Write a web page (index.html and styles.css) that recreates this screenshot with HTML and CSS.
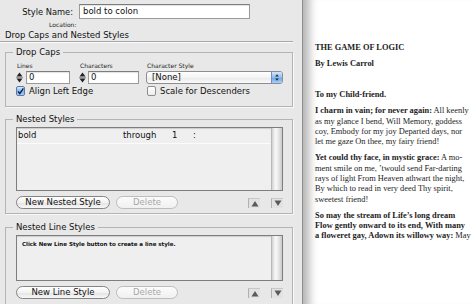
FILE: index.html
```html
<!DOCTYPE html>
<html>
<head>
<meta charset="utf-8">
<link rel="stylesheet" href="styles.css">
</head>
<body>
<div class="panel">
  <div class="name-row">
    <span class="name-label">Style Name:</span>
    <div class="name-input">bold to colon</div>
  </div>
  <div class="location">Location:</div>
  <div class="section-title">Drop Caps and Nested Styles</div>

  <fieldset class="group dropcaps">
    <legend>Drop Caps</legend>
    <div class="dc-grid">
      <div class="small-label">Lines</div>
      <div class="small-label">Characters</div>
      <div class="small-label">Character Style</div>

      <div class="spin">
        <svg class="spin-arrows" width="7" height="13" viewBox="0 0 7 13"><path d="M3.5 1.5 L6.5 5.5 L0.5 5.5 Z" fill="#222"/><line x1="0" y1="6.5" x2="7" y2="6.5" stroke="#999" stroke-width="1"/><path d="M0.5 7.5 L6.5 7.5 L3.5 11.5 Z" fill="#222"/></svg>
        <div class="num num-lines">0</div>
      </div>
      <div class="spin">
        <svg class="spin-arrows" width="7" height="13" viewBox="0 0 7 13"><path d="M3.5 1.5 L6.5 5.5 L0.5 5.5 Z" fill="#222"/><line x1="0" y1="6.5" x2="7" y2="6.5" stroke="#999" stroke-width="1"/><path d="M0.5 7.5 L6.5 7.5 L3.5 11.5 Z" fill="#222"/></svg>
        <div class="num num-chars">0</div>
      </div>
      <div class="select">
        <span class="select-text">[None]</span>
        <span class="select-step">
          <svg width="11" height="11" viewBox="0 0 11 11"><path d="M5.5 2 L7.5 4.5 L3.5 4.5 Z" fill="#1d2c44"/><path d="M3.5 6.5 L7.5 6.5 L5.5 9 Z" fill="#1d2c44"/></svg>
        </span>
      </div>

      <label class="check check-wide"><span class="box checked"><svg width="9" height="9" viewBox="0 0 9 9"><path d="M1.5 4.5 L3.6 7.2 L8.2 0.6" fill="none" stroke="#10203a" stroke-width="1.8"/></svg></span>Align Left Edge</label>
      <label class="check"><span class="box"></span>Scale for Descenders</label>
    </div>
  </fieldset>

  <fieldset class="group nested">
    <legend>Nested Styles</legend>
    <div class="list list-nested">
      <div class="list-body">
        <div class="row">
          <span>bold</span><span>through</span><span>1</span><span>:</span>
        </div>
      </div>
      <div class="scrollbar"></div>
    </div>
    <div class="buttons">
      <div class="btn btn-wide">New Nested Style</div>
      <div class="btn btn-disabled">Delete</div>
      <div class="arrows">
        <div class="arrow-btn"><svg width="8" height="7" viewBox="0 0 8 7"><path d="M4 1 L7.5 6.5 L0.5 6.5 Z" fill="#5a5a5a"/></svg></div>
        <div class="arrow-btn"><svg width="8" height="7" viewBox="0 0 8 7"><path d="M0.5 0.5 L7.5 0.5 L4 6 Z" fill="#5a5a5a"/></svg></div>
      </div>
    </div>
  </fieldset>

  <fieldset class="group linestyles">
    <legend>Nested Line Styles</legend>
    <div class="list list-lines">
      <div class="list-body">
        <div class="hint">Click New Line Style button to create a line style.</div>
      </div>
      <div class="scrollbar"></div>
    </div>
    <div class="buttons">
      <div class="btn btn-wide">New Line Style</div>
      <div class="btn btn-disabled">Delete</div>
      <div class="arrows">
        <div class="arrow-btn"><svg width="8" height="7" viewBox="0 0 8 7"><path d="M4 1 L7.5 6.5 L0.5 6.5 Z" fill="#5a5a5a"/></svg></div>
        <div class="arrow-btn"><svg width="8" height="7" viewBox="0 0 8 7"><path d="M0.5 0.5 L7.5 0.5 L4 6 Z" fill="#5a5a5a"/></svg></div>
      </div>
    </div>
  </fieldset>
</div>

<div class="doc">
  <p class="p-title"><b>THE GAME OF LOGIC</b></p>
  <p class="p-by"><b>By Lewis Carrol</b></p>
  <p class="p-to"><b>To my Child-friend.</b></p>
  <p><b>I charm in vain; for never again:</b> All keenly<br>as my glance I bend, Will Memory, goddess<br>coy, Embody for my joy Departed days, nor<br>let me gaze On thee, my fairy friend!</p>
  <p><b>Yet could thy face, in mystic grace:</b> A mo-<br>ment smile on me, ’twould send Far-darting<br>rays of light From Heaven athwart the night,<br>By which to read in very deed Thy spirit,<br>sweetest friend!</p>
  <p><b>So may the stream of Life’s long dream<br>Flow gently onward to its end, With many<br>a floweret gay, Adown its willowy way:</b> May</p>
</div>
</body>
</html>
```

FILE: styles.css
```css
* { box-sizing: border-box; }
html, body { margin: 0; padding: 0; }
body {
  width: 474px;
  height: 304px;
  overflow: hidden;
  display: flex;
  font-family: "DejaVu Sans", "Liberation Sans", sans-serif;
  font-size: 8.5px;
  color: #111;
  background: #fff;
}

.panel {
  width: 303px;
  flex: none;
  background: #e8e8e8;
  border-right: 1px solid #8e8e8e;
  overflow: hidden;
}

.name-row {
  display: flex;
  align-items: center;
  padding-top: 4px;
  height: 19px;
}
.name-label {
  width: 79px;
  padding-right: 6px;
  text-align: right;
  font-size: 8.3px;
}
.name-input {
  width: 171px;
  height: 15px;
  background: #fff;
  border: 1px solid #9a9a9a;
  border-top-color: #7c7c7c;
  box-shadow: inset 0 1px 1px rgba(0,0,0,0.12);
  padding: 0 3px;
  line-height: 13px;
  font-size: 8.5px;
}

.location {
  margin-top: 2px;
  padding-left: 49px;
  font-size: 6px;
  line-height: 8px;
  color: #222;
}

.section-title {
  margin-top: 1px;
  width: 293px;
  padding-left: 5px;
  font-size: 8.5px;
  line-height: 11px;
  border-bottom: 1px solid #a8a8a8;
  box-shadow: 0 1px 0 #fafafa;
}

.group {
  margin: 0 0 0 5px;
  width: 288px;
  border: 1px solid #b4b4b4;
  box-shadow: 1px 1px 0 #f8f8f8;
  padding: 0 9px 0 10px;
  min-width: 0;
}
.group legend {
  margin-left: -3px;
  padding: 0 3px;
  font-size: 8.5px;
  line-height: 11px;
}
.dropcaps { margin-top: 5px; padding-bottom: 10px; }
.nested { margin-top: 7px; padding-bottom: 4px; }
.linestyles { margin-top: 8px; padding-bottom: 20px; }

.dc-grid {
  display: grid;
  grid-template-columns: 63px 67px 137px;
  padding-top: 4px;
}
.small-label {
  font-size: 6px;
  line-height: 8px;
  padding-left: 1px;
  color: #222;
}
.spin {
  display: flex;
  align-items: center;
  margin-top: 1px;
  height: 13px;
}
.spin-arrows { flex: none; }
.num {
  margin-left: 3px;
  height: 13px;
  background: #fff;
  border: 1px solid #9a9a9a;
  border-top-color: #7c7c7c;
  box-shadow: inset 0 1px 1px rgba(0,0,0,0.12);
  padding-left: 2px;
  line-height: 11px;
  font-size: 8.5px;
}
.num-lines { width: 44px; }
.num-chars { width: 51px; margin-left: 2px; }

.select {
  margin-top: 1px;
  height: 13px;
  display: flex;
  border: 1px solid #8e8e8e;
  border-radius: 3px;
  background: linear-gradient(#ffffff, #f3f3f3 50%, #e9e9e9 51%, #fafafa);
  overflow: hidden;
}
.select-text {
  flex: 1;
  padding-left: 5px;
  line-height: 11px;
  font-size: 8.5px;
}
.select-step {
  width: 11px;
  flex: none;
  border-left: 1px solid #6d8fbd;
  background: linear-gradient(#d4e6fb, #8fbcef 50%, #6aa3e8 51%, #a8d0fa);
  display: flex;
  align-items: center;
  justify-content: center;
}

.check {
  display: flex;
  align-items: center;
  margin-top: 2px;
  height: 10px;
  font-size: 8.5px;
  line-height: 10px;
  white-space: nowrap;
}
.check-wide { grid-column: 1 / 3; }
.box {
  width: 9px;
  height: 10px;
  flex: none;
  margin-right: 4px;
  border: 1px solid #8e8e8e;
  border-radius: 2px;
  background: linear-gradient(#ffffff, #ececec);
}
.box.checked {
  border-color: #5a7ba9;
  background: linear-gradient(#d8e8fb, #80b2ee 55%, #a8cdf7);
  display: flex;
  align-items: center;
  justify-content: center;
}
.check:not(.check-wide) { margin-left: 1px; }

.list {
  margin-top: 2px;
  display: flex;
  border: 1px solid #7e7e7e;
  background: #efefef;
  box-shadow: inset 0 1px 1px rgba(0,0,0,0.15);
}
.list-nested { height: 64px; }
.list-lines { height: 46px; }
.list-body { flex: 1; }
.scrollbar {
  width: 11px;
  flex: none;
  border-left: 1px solid #b8b8b8;
  background: linear-gradient(to right, #d2d2d2, #f7f7f7 35%, #ececec 60%, #c9c9c9);
}
.row {
  display: grid;
  grid-template-columns: 105px 49px 21px auto;
  height: 16px;
  line-height: 15px;
  padding-left: 1px;
  border-bottom: 1px solid #fbfbfb;
  font-size: 8.5px;
}
.hint {
  padding: 5px 0 0 5px;
  font-family: "DejaVu Sans", sans-serif;
  font-size: 5.5px;
  font-weight: bold;
  line-height: 7px;
}

.buttons {
  display: flex;
  align-items: center;
  margin-top: 5px;
  height: 13px;
}
.btn {
  height: 13px;
  border: 1px solid #858585;
  border-radius: 7px;
  background: linear-gradient(#ffffff, #f2f2f2 50%, #e2e2e2 51%, #f8f8f8);
  text-align: center;
  line-height: 11px;
  font-size: 8.5px;
}
.btn-wide { width: 94px; }
.btn-disabled {
  width: 62px;
  margin-left: 6px;
  border-color: #bdbdbd;
  color: #a8a8a8;
  background: linear-gradient(#fbfbfb, #f0f0f0);
}
.arrows {
  margin-left: auto;
  display: flex;
  gap: 11px;
}
.arrow-btn {
  width: 12px;
  height: 10px;
  border-left: 1px solid #b0b0b0;
  border-top: 1px solid #c8c8c8;
  background: #e2e2e2;
  display: flex;
  align-items: center;
  justify-content: center;
}

.doc {
  flex: 1;
  background: #fff;
  box-shadow: inset 14px 0 10px -8px rgba(0,0,0,0.3);
  padding: 43px 0 0 12px;
  font-family: "Liberation Serif", "DejaVu Serif", serif;
  font-size: 8.4px;
  line-height: 10.3px;
  color: #1c1c1c;
  white-space: nowrap;
}
.doc p { margin: 0 0 5.8px 0; }
.doc .p-by { margin-bottom: 21px; }
```
